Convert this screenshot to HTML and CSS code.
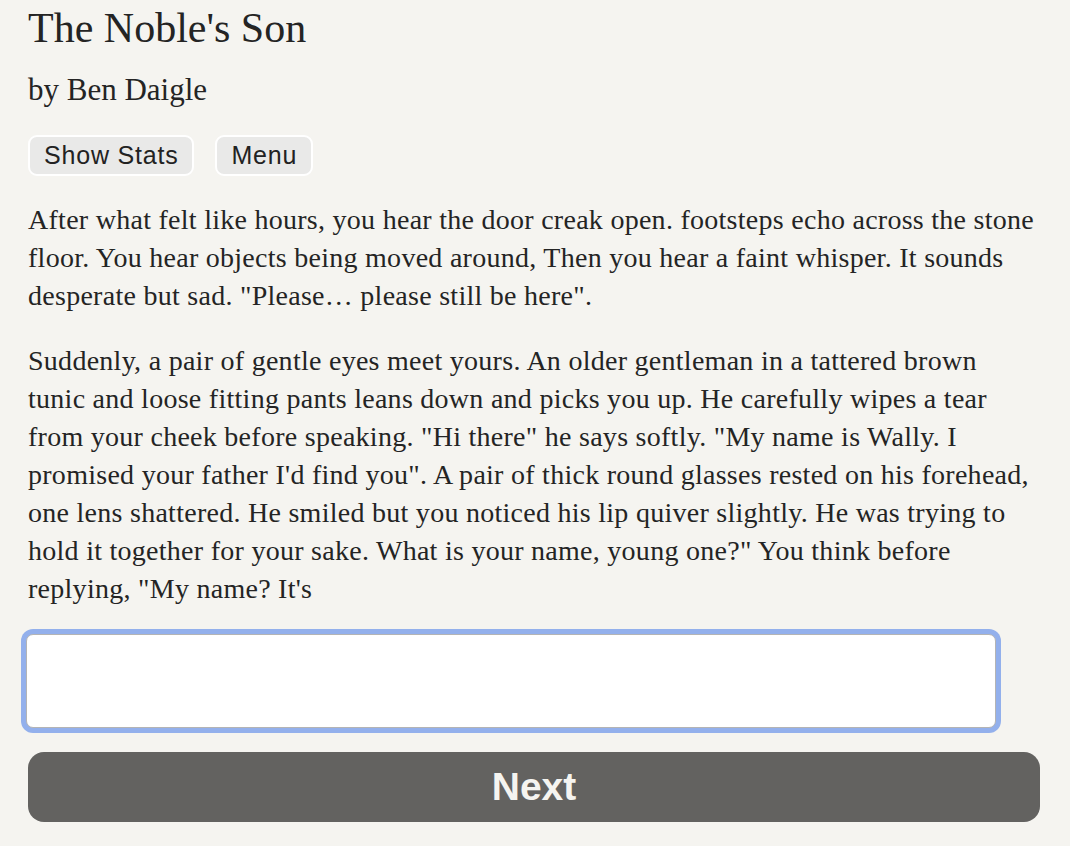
FILE: index.html
```html
<!DOCTYPE html>
<html lang="en">
<head>
<meta charset="utf-8">
<title>The Noble's Son</title>
<link rel="stylesheet" href="styles.css">
</head>
<body>
<main class="story">
  <h1 class="story-title">The Noble's Son</h1>
  <p class="story-author">by Ben Daigle</p>
  <div class="toolbar">
    <button class="tool-btn" type="button">Show Stats</button>
    <button class="tool-btn" type="button">Menu</button>
  </div>
  <div class="passage">
    <p>After what felt like hours, you hear the door creak open. footsteps echo across the stone floor. You hear objects being moved around, Then you hear a faint whisper. It sounds desperate but sad. "Please… please still be here".</p>
    <p>Suddenly, a pair of gentle eyes meet yours. An older gentleman in a tattered brown tunic and loose fitting pants leans down and picks you up. He carefully wipes a tear from your cheek before speaking. "Hi there" he says softly. "My name is Wally. I promised your father I'd find you". A pair of thick round glasses rested on his forehead, one lens shattered. He smiled but you noticed his lip quiver slightly. He was trying to hold it together for your sake. What is your name, young one?" You think before replying, "My name? It's</p>
  </div>
  <form class="answer" onsubmit="return false">
    <input class="answer-input" type="text" aria-label="Your name">
    <button class="next-btn" type="submit">Next</button>
  </form>
</main>
</body>
</html>
```
FILE: styles.css
```css
html, body {
  margin: 0;
  padding: 0;
  background: #f5f4f0;
}

body {
  color: #242424;
  font-family: "Liberation Serif", "Times New Roman", serif;
}

.story {
  padding: 4px 30px 0 28px;
}

.story-title {
  margin: 0;
  font-size: 42px;
  line-height: 48px;
  font-weight: normal;
}

.story-author {
  margin: 20px 0 0;
  font-size: 31px;
  line-height: 36px;
}

.toolbar {
  display: flex;
  gap: 21px;
  margin-top: 27px;
}

.tool-btn {
  height: 41px;
  padding: 0 14px;
  border: 2px solid #ffffff;
  border-radius: 9px;
  background: #e9e9e8;
  color: #222222;
  font-family: "Liberation Sans", Arial, sans-serif;
  font-size: 25px;
  letter-spacing: 0.8px;
  line-height: 37px;
}

.passage {
  margin-top: 25px;
  font-size: 28px;
  letter-spacing: 0.27px;
  line-height: 38px;
}

.passage p {
  margin: 0 0 26.6px;
}

.answer {
  display: flex;
  flex-direction: column;
  align-items: flex-start;
  margin-top: 25px;
}

.answer-input {
  box-sizing: border-box;
  width: 970px;
  height: 94px;
  margin-left: -2px;
  border: 1px solid #b4b4b4;
  border-radius: 7px;
  background: #ffffff;
  box-shadow: 0 0 0 5px #93b0ec;
  outline: none;
  font-size: 24px;
}

.next-btn {
  box-sizing: border-box;
  width: 100%;
  height: 70px;
  margin-top: 24px;
  border: none;
  border-radius: 16px;
  background: #636260;
  color: #f5f4f0;
  font-family: "Liberation Sans", Arial, sans-serif;
  font-size: 39px;
  font-weight: bold;
}
```
